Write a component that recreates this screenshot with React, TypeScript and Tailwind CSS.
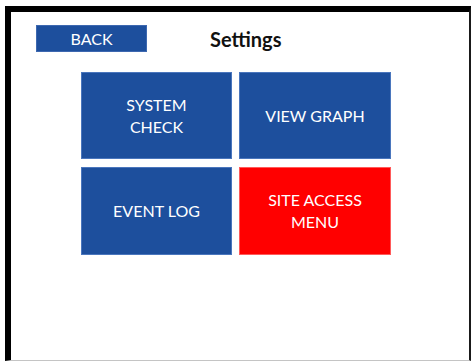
import React from 'react';

const tiles = [
  { label: ['SYSTEM', 'CHECK'], bg: 'bg-[#1d4f9d] border-[#4a76bd]' },
  { label: ['VIEW GRAPH'], bg: 'bg-[#1d4f9d] border-[#4a76bd]' },
  { label: ['EVENT LOG'], bg: 'bg-[#1d4f9d] border-[#4a76bd]' },
  { label: ['SITE ACCESS', 'MENU'], bg: 'bg-[#ff0000] border-[#ff5a5a]' },
];

const App = () => {
  return (
    <div className="w-[472px] h-[361px] bg-white pl-[5px] pt-[6px] pr-px font-['Lato','Open_Sans',sans-serif]">
      <div className="h-full border-l-[6px] border-t-[6px] border-r-2 border-b border-l-black border-t-black border-r-[#1a1a1a] border-b-[#c4c4c4]">
        <div className="flex items-center pl-[25px] pt-[13px]">
          <div className="w-[111px] h-[27px] bg-[#1d4f9d] border border-[#3d68b0] flex items-center justify-center text-white text-[16px]">
            BACK
          </div>
          <h1 className="ml-[63px] text-[20px] font-bold text-[#111] leading-none">Settings</h1>
        </div>

        <div className="ml-[70px] mt-[20px] grid grid-cols-[151px_152px] grid-rows-[87px_88px] gap-x-[7px] gap-y-[8px]">
          {tiles.map((tile, i) => (
            <div
              key={i}
              className={`${tile.bg} border flex flex-col items-center justify-center text-white text-[16px] leading-[22px]`}
            >
              {tile.label.map((line, j) => (
                <span key={j}>{line}</span>
              ))}
            </div>
          ))}
        </div>
      </div>
    </div>
  );
};

export default App;
